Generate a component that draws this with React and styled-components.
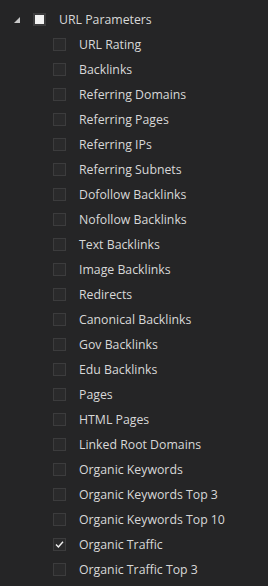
import React from 'react';
import styled, { createGlobalStyle } from 'styled-components';

const Global = createGlobalStyle`
    html, body {
        margin: 0;
        padding: 0;
        background: #252526;
    }
    body {
        font-family: "Open Sans", "Noto Sans", sans-serif;
    }
`;

const Tree = styled.ul`
    list-style: none;
    margin: 0;
    padding: 7px 0 0 0;
    width: 268px;
    height: 586px;
    box-sizing: border-box;
    overflow: hidden;
    background: #252526;
`;

const Row = styled.li`
    display: flex;
    align-items: center;
    height: 25px;
    padding-left: ${({ level }) => (level ? 53 : 14)}px;
    color: #d8d8d8;
    font-size: 12.3px;
    white-space: nowrap;
`;

const Twisty = styled.span`
    width: 0;
    height: 0;
    border-style: solid;
    border-width: 0 0 6px 6px;
    border-color: transparent transparent #c8c8c8 transparent;
    margin-right: 13px;
`;

const Box = styled.span`
    display: inline-flex;
    align-items: center;
    justify-content: center;
    width: 13px;
    height: 13px;
    box-sizing: border-box;
    border: 1px solid #3c3c3d;
    background: ${({ mixed }) => (mixed ? '#3a3a3b' : '#2a2a2b')};
    margin-right: 13px;
    flex-shrink: 0;
`;

const Mixed = styled.span`
    width: 9px;
    height: 9px;
    background: #f2f2f2;
`;

const Label = styled.span`
    line-height: 1;
    padding-top: 2px;
`;

const Check = () => (
    <svg width="9" height="9" viewBox="0 0 9 9">
        <path d="M1 4.6 L3.4 7 L8 1.8" fill="none" stroke="#f0f0f0" strokeWidth="1.4" />
    </svg>
);

const items = [
    'URL Rating',
    'Backlinks',
    'Referring Domains',
    'Referring Pages',
    'Referring IPs',
    'Referring Subnets',
    'Dofollow Backlinks',
    'Nofollow Backlinks',
    'Text Backlinks',
    'Image Backlinks',
    'Redirects',
    'Canonical Backlinks',
    'Gov Backlinks',
    'Edu Backlinks',
    'Pages',
    'HTML Pages',
    'Linked Root Domains',
    'Organic Keywords',
    'Organic Keywords Top 3',
    'Organic Keywords Top 10',
    'Organic Traffic',
    'Organic Traffic Top 3',
];

const checked = ['Organic Traffic'];

export default function App() {
    return (
        <>
            <Global />
            <Tree>
                <Row>
                    <Twisty />
                    <Box mixed>
                        <Mixed />
                    </Box>
                    <Label>URL Parameters</Label>
                </Row>
                {items.map((name) => (
                    <Row key={name} level={1}>
                        <Box>{checked.includes(name) && <Check />}</Box>
                        <Label>{name}</Label>
                    </Row>
                ))}
            </Tree>
        </>
    );
}
